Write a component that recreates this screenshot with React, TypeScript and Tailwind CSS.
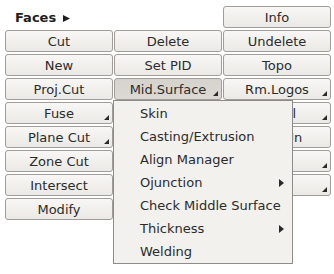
import React from "react";

type Btn = { label: string; corner?: boolean; pressed?: boolean } | null;

const rows: Btn[][] = [
  [null, null, { label: "Info" }],
  [{ label: "Cut" }, { label: "Delete" }, { label: "Undelete" }],
  [{ label: "New" }, { label: "Set PID" }, { label: "Topo" }],
  [{ label: "Proj.Cut" }, { label: "Mid.Surface", corner: true, pressed: true }, { label: "Rm.Logos", corner: true }],
  [{ label: "Fuse", corner: true }, { label: "" }, { label: "Detail", corner: true }],
  [{ label: "Plane Cut", corner: true }, { label: "" }, { label: "Split Un" }],
  [{ label: "Zone Cut" }, { label: "" }, { label: "Trim", corner: true }],
  [{ label: "Intersect" }, { label: "" }, { label: "Flip", corner: true }],
  [{ label: "Modify" }, null, null],
];

function Corner() {
  return (
    <svg className="absolute right-[3px] bottom-[3px]" width="5" height="5" viewBox="0 0 5 5">
      <polygon points="5,0 5,5 0,5" fill="#2a2a2a" />
    </svg>
  );
}

function Button({ b }: { b: NonNullable<Btn> }) {
  return (
    <div
      className={
        "relative h-[22px] rounded-[3px] border border-[#a09d98] flex items-center justify-center text-[13px] text-[#2b2b2b] leading-none " +
        (b.pressed
          ? "bg-gradient-to-b from-[#d6d3ce] to-[#dcd9d4]"
          : "bg-gradient-to-b from-[#f8f7f5] to-[#ebe9e5]")
      }
    >
      <span className="whitespace-nowrap">{b.label}</span>
      {b.corner && <Corner />}
    </div>
  );
}

const items: { label: string; sub?: boolean }[] = [
  { label: "Skin" },
  { label: "Casting/Extrusion" },
  { label: "Align Manager" },
  { label: "Ojunction", sub: true },
  { label: "Check Middle Surface" },
  { label: "Thickness", sub: true },
  { label: "Welding" },
];

export default function App() {
  return (
    <div
      className="relative w-[334px] h-[274px] bg-white overflow-hidden"
      style={{ fontFamily: '"DejaVu Sans", sans-serif' }}
    >
      <div className="pt-[6px] pl-[5px] grid grid-cols-[108px_108px_108px] gap-x-[1px] gap-y-[2px]">
        {rows.map((r, i) =>
          r.map((b, j) =>
            b ? (
              <Button key={`${i}-${j}`} b={b} />
            ) : i === 0 && j === 0 ? (
              <div key={`${i}-${j}`} className="h-[22px] flex items-center pl-[10px] text-[13px] font-bold text-[#1e1e1e] leading-none">
                Faces
                <svg className="ml-[7px] mt-[3px]" width="7" height="7" viewBox="0 0 7 7">
                  <polygon points="0,0 7,3.5 0,7" fill="#1e1e1e" />
                </svg>
              </div>
            ) : (
              <div key={`${i}-${j}`} className="h-[22px]" />
            )
          )
        )}
      </div>

      <div className="absolute left-[113px] top-[100px] w-[180px] h-[164px] bg-[#f2f1ee] border border-[#8e8c88] pt-[1px]">
        {items.map((it) => (
          <div key={it.label} className="relative h-[23px] flex items-center pl-[26px] text-[13px] text-[#2b2b2b] leading-none whitespace-nowrap">
            {it.label}
            {it.sub && (
              <svg className="absolute right-[8px] top-[8px]" width="5" height="8" viewBox="0 0 5 8">
                <polygon points="0,0 5,4 0,8" fill="#2a2a2a" />
              </svg>
            )}
          </div>
        ))}
      </div>
    </div>
  );
}
